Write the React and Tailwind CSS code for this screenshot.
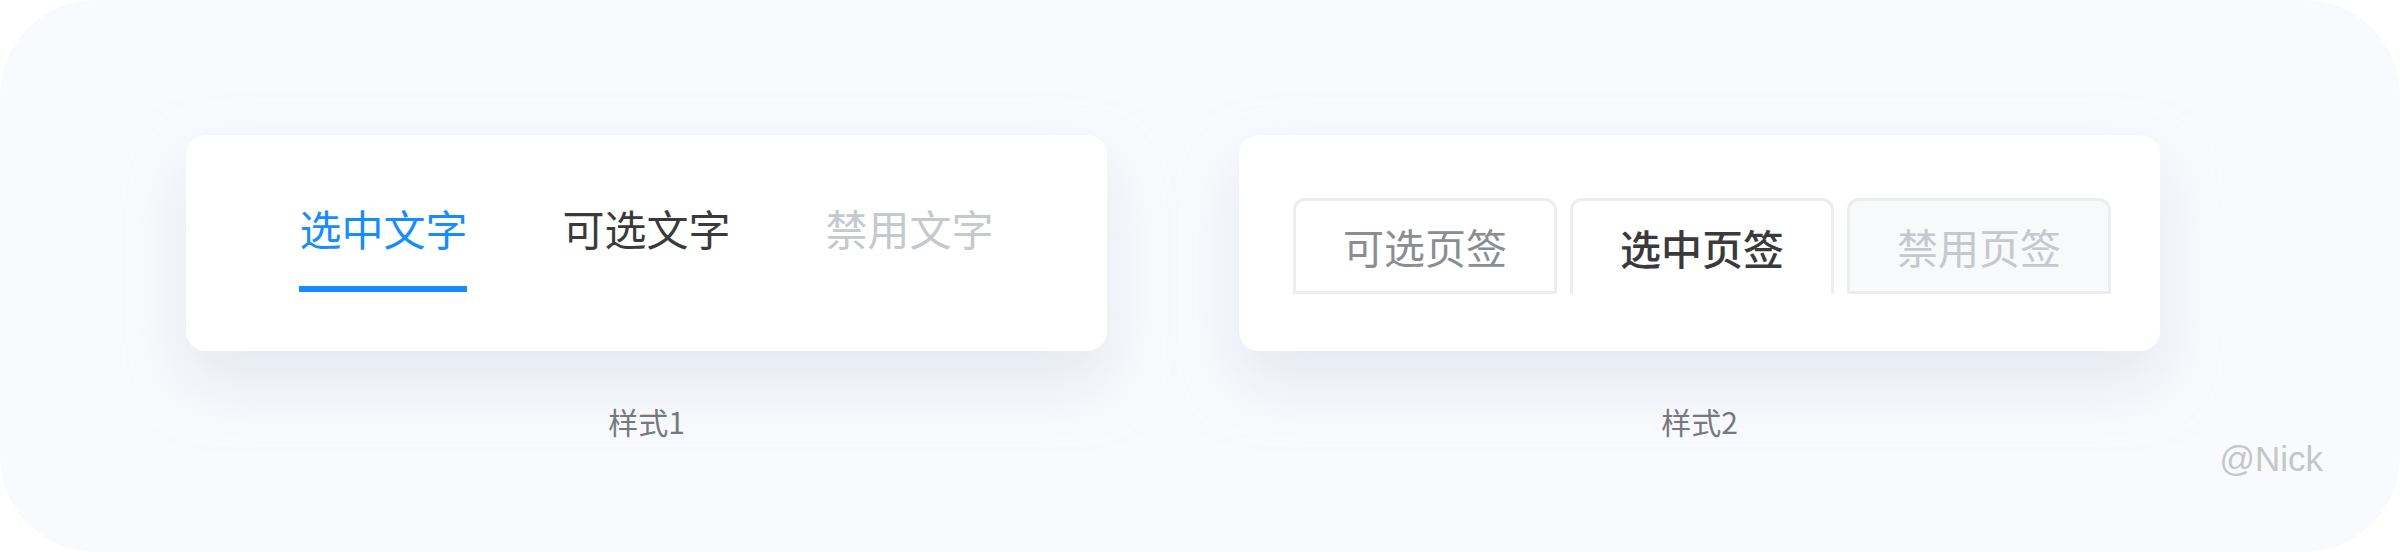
import React from 'react'

const textTabs = [
  { label: '选中文字', state: 'active' },
  { label: '可选文字', state: 'normal' },
  { label: '禁用文字', state: 'disabled' },
]

const cardTabs = [
  { label: '可选页签', state: 'normal' },
  { label: '选中页签', state: 'active' },
  { label: '禁用页签', state: 'disabled' },
]

const textColor = {
  active: 'text-[#168cff]',
  normal: 'text-[#3a3a3c]',
  disabled: 'text-[#c5c8cc]',
}

const cardStyles = {
  normal: 'border-b-[3px] bg-white text-[#8a8d92]',
  active: 'border-b-0 bg-white text-[#3a3a3c] font-medium',
  disabled: 'border-b-[3px] bg-[#f8f9fb] text-[#c5c8cc]',
}

const Card = ({ children, className = '' }) => (
  <div
    className={`h-[216px] w-[921px] rounded-[20px] bg-white shadow-[0_30px_60px_0_rgba(210,215,232,0.5)] ${className}`}
  >
    {children}
  </div>
)

const Caption = ({ children }) => (
  <p className="mt-[55px] text-[30px] leading-none text-[#77787c]">{children}</p>
)

export default function App() {
  return (
    <div className="h-[552px] w-[2400px] bg-white font-['Noto_Sans_CJK_SC','Noto_Sans',sans-serif]">
      <div className="relative flex h-full w-full gap-[132px] rounded-[96px] bg-[#f9fafd] pl-[186px] pt-[135px]">
        <div className="flex flex-col items-center">
          <Card className="flex justify-center gap-[95px] pt-[72px]">
            {textTabs.map((tab) => (
              <div key={tab.label} className="flex flex-col items-stretch">
                <span className={`text-[42px] leading-none ${textColor[tab.state]}`}>{tab.label}</span>
                {tab.state === 'active' ? (
                  <span className="mt-[37px] h-[6px] bg-[#168cff]" />
                ) : null}
              </div>
            ))}
          </Card>
          <Caption>样式1</Caption>
        </div>

        <div className="flex flex-col items-center">
          <Card className="flex gap-[13px] pl-[54px] pt-[63px]">
            {cardTabs.map((tab) => (
              <div
                key={tab.label}
                className={`flex h-[96px] w-[264px] items-center justify-center rounded-t-[12px] border-x-[3px] border-t-[3px] border-[#ebedf0] text-[41px] leading-none ${cardStyles[tab.state]}`}
              >
                {tab.label}
              </div>
            ))}
          </Card>
          <Caption>样式2</Caption>
        </div>

        <span className="absolute bottom-[76px] right-[77px] font-['Liberation_Sans',sans-serif] text-[35px] leading-none text-[#c6c6c6]">
          @Nick
        </span>
      </div>
    </div>
  )
}
